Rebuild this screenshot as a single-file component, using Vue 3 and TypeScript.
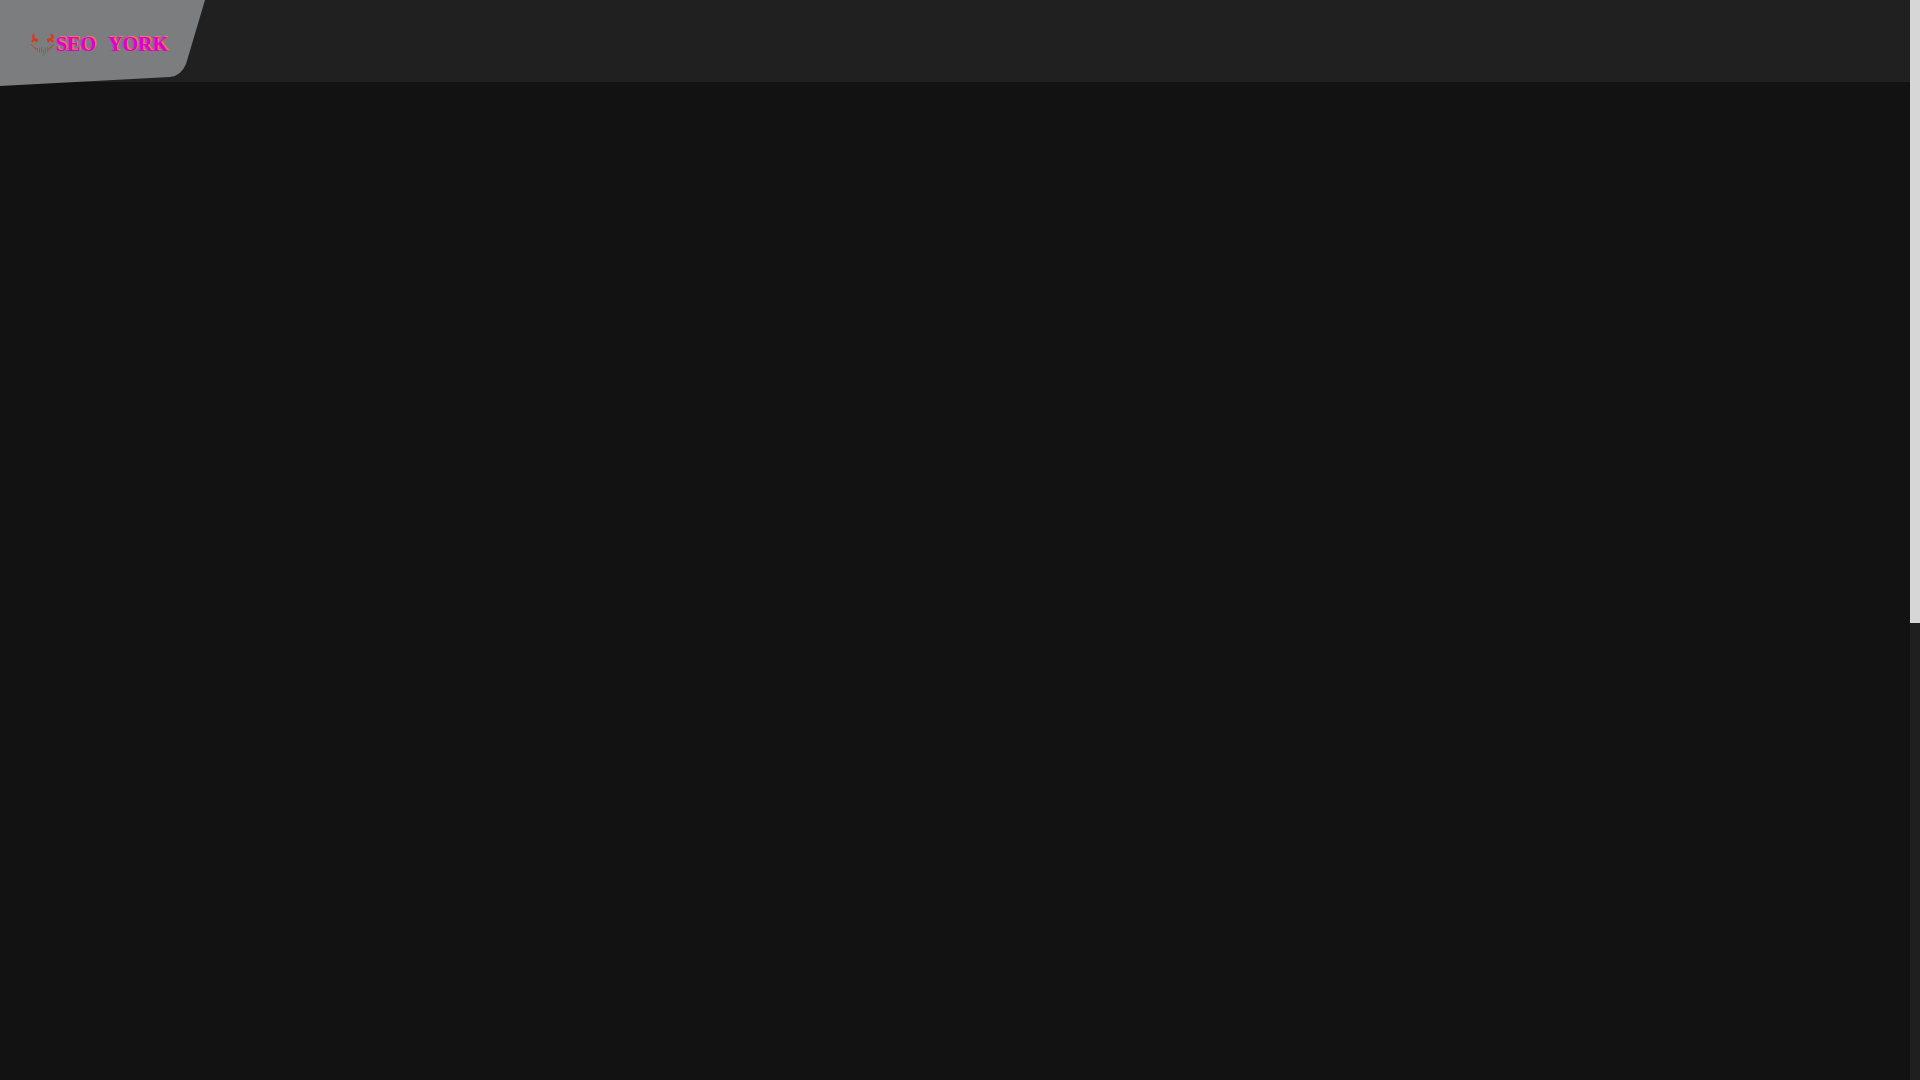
<script setup lang="ts">
const words: string[] = ['SEO', 'YORK']
</script>

<template>
  <div class="page">
    <div class="content">
      <header class="bar">
        <a class="brand" href="#">
          <svg class="plate" viewBox="0 0 216 88" aria-hidden="true">
            <path d="M0 0H205L186 64Q181 76 170 77L0 86Z" fill="#7b7d7e" />
          </svg>
          <svg class="mask" viewBox="0 0 24 24" aria-hidden="true">
            <g fill="none" stroke="#dc3815" stroke-width="2">
              <path d="M4 2L3 5L4 7L8 8M4 7L2 10M5 7L7 10" />
              <path d="M21 2L23 5L21 7L17 8M21 7L23 10M20 7L18 10" />
            </g>
            <g fill="none" stroke="#c9482f">
              <path d="M1 12L3 15L7 17M24 12L22 15L18 17" />
              <path d="M5.5 15V18M7.5 16V20M9.5 16V21M11.5 15V21M13.5 17V24M15.5 16V22M17.5 15V20M19.5 15V19M21.5 13V17" />
            </g>
          </svg>
          <span class="name">
            <span v-for="word in words" :key="word">{{ word }}</span>
          </span>
        </a>
      </header>
      <main class="body"></main>
    </div>
    <div class="track" aria-hidden="true">
      <div class="thumb"></div>
    </div>
  </div>
</template>

<style>
body {
  margin: 0;
  background: #121212;
}
</style>

<style scoped>
.page {
  display: flex;
  min-height: 100vh;
  background: #121212;
}

.content {
  flex: 1;
  display: flex;
  flex-direction: column;
}

.bar {
  height: 82px;
  background: #202020;
}

.brand {
  position: relative;
  display: inline-flex;
  align-items: center;
  gap: 2px;
  height: 88px;
  padding-left: 30px;
  box-sizing: border-box;
  text-decoration: none;
}

.plate {
  position: absolute;
  top: 0;
  left: 0;
  width: 216px;
  height: 88px;
}

.mask {
  position: relative;
  width: 24px;
  height: 24px;
}

.name {
  position: relative;
  display: flex;
  gap: 12px;
  color: #dc00d2;
  font-family: "Liberation Serif", serif;
  font-size: 20px;
  font-weight: 700;
  line-height: 24px;
  text-shadow: 1px -1px 0 #ef7850, -1px 0 0 #e5409b;
}

.body {
  flex: 1;
}

.track {
  display: flex;
  flex-direction: column;
  width: 10px;
  background: #1f1f1f;
}

.thumb {
  flex: 0 0 57.7%;
  background: #d6d6d6;
}
</style>
